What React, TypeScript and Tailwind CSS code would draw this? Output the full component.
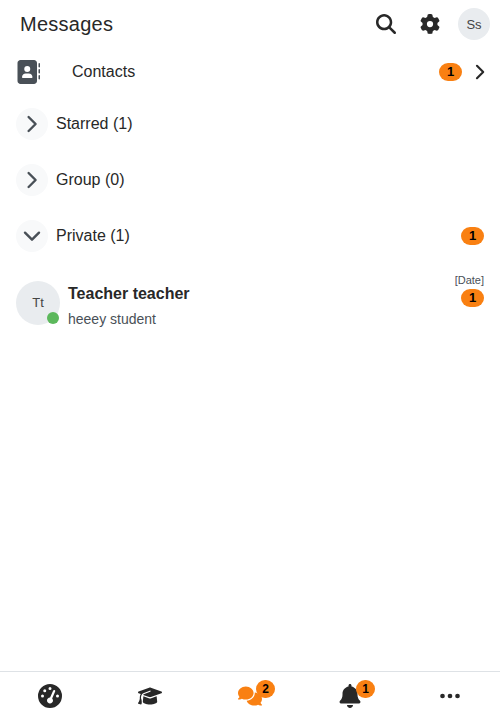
import React from "react";
import {
  FaMagnifyingGlass,
  FaGear,
  FaAddressBook,
  FaGaugeHigh,
  FaGraduationCap,
  FaComments,
  FaBell,
} from "react-icons/fa6";

function Badge({ count }: { count: number }) {
  return (
    <span className="flex h-[18px] w-[23px] items-center justify-center rounded-[9px] bg-[#f98012] pb-px text-[13px] leading-none font-bold text-black">
      {count}
    </span>
  );
}

function Chevron({ size, down, className = "" }: { size: number; down?: boolean; className?: string }) {
  return (
    <svg
      width={size}
      height={size}
      viewBox="0 0 18 18"
      fill="none"
      stroke="currentColor"
      strokeWidth="2.4"
      strokeLinecap="round"
      strokeLinejoin="round"
      className={className}
    >
      <path d={down ? "M2 5.7l7 7 7-7" : "M5.6 2l7 7-7 7"} />
    </svg>
  );
}

function Section({ label, open, count }: { label: string; open?: boolean; count?: number }) {
  return (
    <div className="flex h-14 items-center px-4">
      <span className="mr-2 flex size-8 items-center justify-center rounded-full bg-[#f8f9fa] text-[#495057]">
        <Chevron size={18} down={open} />
      </span>
      <span className="flex-1">{label}</span>
      {count ? <Badge count={count} /> : null}
    </div>
  );
}

function Tab({ icon, count }: { icon: React.ReactNode; count?: number }) {
  return (
    <div className="flex flex-1 items-center justify-center">
      <span className="relative block">
        {icon}
        {count ? (
          <span className="absolute -top-1 left-[18px] flex h-[18px] w-[19px] items-center justify-center rounded-full bg-[#f98012] text-xs leading-none font-bold text-black">
            {count}
          </span>
        ) : null}
      </span>
    </div>
  );
}

export default function App() {
  return (
    <div className="flex h-[720px] w-[500px] flex-col bg-white font-['Liberation_Sans',Arial,sans-serif] text-base text-[#282828]">
      <header className="flex h-12 items-center pr-[10px] pl-5">
        <h1 className="flex-1 text-xl tracking-[0.25px]">Messages</h1>
        <FaMagnifyingGlass size={20} />
        <FaGear size={20} className="ml-[23.5px]" />
        <span className="ml-[18.5px] flex size-8 items-center justify-center rounded-full bg-[#e9ecef] pt-0.5 text-[13px] text-[#444444]">Ss</span>
      </header>
      <div className="flex h-12 items-center pr-3 pl-4">
        <FaAddressBook size={24} className="text-[#495057]" />
        <span className="ml-8 flex-1">Contacts</span>
        <Badge count={1} />
        <Chevron size={16} className="ml-[9.5px] mr-[0.5px]" />
      </div>
      <Section label="Starred (1)" />
      <Section label="Group (0)" />
      <Section label="Private (1)" open count={1} />
      <div className="flex h-[78px] items-center px-4">
        <span className="relative flex size-11 items-center justify-center rounded-full bg-[#e9ecef] text-[13px] text-[#444444]">
          Tt
          <span className="absolute right-px bottom-px size-3 rounded-full bg-[#5cb85c]" />
        </span>
        <div className="ml-2 flex-1 pt-2">
          <div className="leading-6 font-bold">Teacher teacher</div>
          <div className="text-sm leading-[26px] text-[#495057]">heeey student</div>
        </div>
        <div className="flex flex-col items-end self-start pt-2">
          <span className="mb-px text-[11px] leading-4 text-[#495057]">[Date]</span>
          <Badge count={1} />
        </div>
      </div>
      <div className="flex-1" />
      <nav className="flex h-[49px] border-t border-[#dee2e6]">
        <Tab icon={<FaGaugeHigh size={24} />} />
        <Tab icon={<FaGraduationCap size={24} />} />
        <Tab icon={<FaComments size={24} className="text-[#f98012]" />} count={2} />
        <Tab icon={<FaBell size={24} />} count={1} />
        <Tab
          icon={
            <svg width="24" height="24" viewBox="0 0 24 24" fill="currentColor">
              <circle cx="4.5" cy="12" r="2.35" />
              <circle cx="12" cy="12" r="2.35" />
              <circle cx="19.5" cy="12" r="2.35" />
            </svg>
          }
        />
      </nav>
    </div>
  );
}
